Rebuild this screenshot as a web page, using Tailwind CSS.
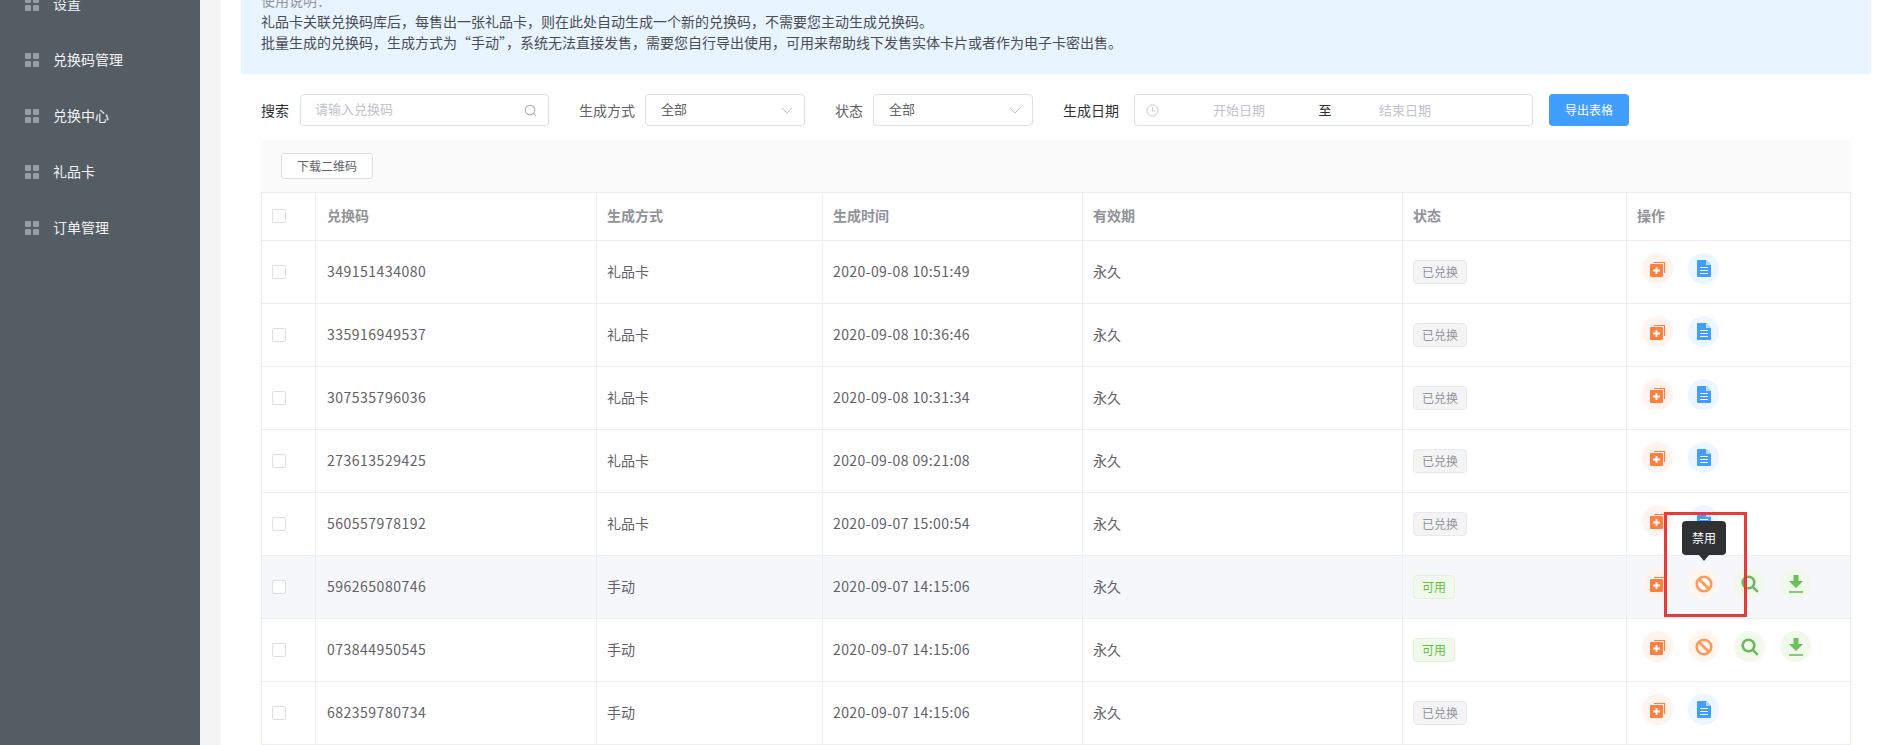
<!DOCTYPE html>
<html lang="zh-CN">
<head>
  <meta charset="UTF-8" />
  <meta name="viewport" content="width=device-width, initial-scale=1" />
  <title>兑换码管理</title>
  <script src="https://cdn.jsdelivr.net/npm/@tailwindcss/browser@4"></script>
</head>
<body class="relative flex h-[745px] overflow-hidden bg-white font-['Noto_Sans_CJK_SC','Noto_Sans',sans-serif] text-[14px] text-[#606266]">
  <aside class="w-[200px] shrink-0 bg-[#545c64] text-[#f2f3f4]">
    <nav class="-mt-[24px]">
      <a class="flex h-[56px] items-center"><span class="ml-[25px] mr-[14px] grid grid-cols-2 gap-[2px]"><i class="size-[6px] rounded-[1px] bg-[#979ca1]"></i><i class="size-[6px] rounded-[1px] bg-[#979ca1]"></i><i class="size-[6px] rounded-[1px] bg-[#979ca1]"></i><i class="size-[6px] rounded-[1px] bg-[#979ca1]"></i></span><span class="-mt-[2px]">设置</span></a>
      <a class="flex h-[56px] items-center"><span class="ml-[25px] mr-[14px] grid grid-cols-2 gap-[2px]"><i class="size-[6px] rounded-[1px] bg-[#979ca1]"></i><i class="size-[6px] rounded-[1px] bg-[#979ca1]"></i><i class="size-[6px] rounded-[1px] bg-[#979ca1]"></i><i class="size-[6px] rounded-[1px] bg-[#979ca1]"></i></span><span class="-mt-[2px]">兑换码管理</span></a>
      <a class="flex h-[56px] items-center"><span class="ml-[25px] mr-[14px] grid grid-cols-2 gap-[2px]"><i class="size-[6px] rounded-[1px] bg-[#979ca1]"></i><i class="size-[6px] rounded-[1px] bg-[#979ca1]"></i><i class="size-[6px] rounded-[1px] bg-[#979ca1]"></i><i class="size-[6px] rounded-[1px] bg-[#979ca1]"></i></span><span class="-mt-[2px]">兑换中心</span></a>
      <a class="flex h-[56px] items-center"><span class="ml-[25px] mr-[14px] grid grid-cols-2 gap-[2px]"><i class="size-[6px] rounded-[1px] bg-[#979ca1]"></i><i class="size-[6px] rounded-[1px] bg-[#979ca1]"></i><i class="size-[6px] rounded-[1px] bg-[#979ca1]"></i><i class="size-[6px] rounded-[1px] bg-[#979ca1]"></i></span><span class="-mt-[2px]">礼品卡</span></a>
      <a class="flex h-[56px] items-center"><span class="ml-[25px] mr-[14px] grid grid-cols-2 gap-[2px]"><i class="size-[6px] rounded-[1px] bg-[#979ca1]"></i><i class="size-[6px] rounded-[1px] bg-[#979ca1]"></i><i class="size-[6px] rounded-[1px] bg-[#979ca1]"></i><i class="size-[6px] rounded-[1px] bg-[#979ca1]"></i></span><span class="-mt-[2px]">订单管理</span></a>
    </nav>
  </aside>
  <div class="w-[21px] shrink-0 bg-[#f3f3f3]"></div>

  <main class="min-w-0 flex-1">
    <!-- 使用说明 -->
    <div class="-mt-[20px] ml-[20px] h-[94px] w-[1630px] rounded-b-[4px] bg-[#e8f4ff] pl-[20px] pt-[10px] leading-[21px] text-[#4a4d52]">
      <p class="text-[#909399]">使用说明：</p>
      <p>礼品卡关联兑换码库后，每售出一张礼品卡，则在此处自动生成一个新的兑换码，不需要您主动生成兑换码。</p>
      <p>批量生成的兑换码，生成方式为“手动”，系统无法直接发售，需要您自行导出使用，可用来帮助线下发售实体卡片或者作为电子卡密出售。</p>
    </div>

    <!-- 筛选 -->
    <div class="ml-[40px] mt-[20px] flex h-[32px] items-center">
      <span class="w-[28px] whitespace-nowrap text-[#303133]">搜索</span>
      <div class="ml-[11px] flex h-[32px] w-[249px] items-center justify-between rounded-[4px] border border-[#dcdfe6] pl-[14px] pr-[11px] text-[13px] text-[#c0c4cc]">
        <span class="-mt-[2px]">请输入兑换码</span>
        <svg class="size-[13px]" viewBox="0 0 14 14" fill="none" stroke="#a8abb2" stroke-width="1.1"><circle cx="6.5" cy="6.5" r="5.2"/><path d="M10.3 10.3L12.6 12.6"/></svg>
      </div>
      <span class="ml-[30px] w-[56px] whitespace-nowrap">生成方式</span>
      <div class="ml-[10px] flex h-[32px] w-[160px] items-center justify-between rounded-[4px] border border-[#dcdfe6] pl-[15px] pr-[11px] text-[13px]">
        <span class="-mt-[2px]">全部</span>
        <svg class="h-[7px] w-[12px]" viewBox="0 0 12 7" fill="none" stroke="#c0c4cc" stroke-width="1"><path d="M1 1L6 6L11 1"/></svg>
      </div>
      <span class="ml-[30px] w-[28px] whitespace-nowrap">状态</span>
      <div class="ml-[10px] flex h-[32px] w-[160px] items-center justify-between rounded-[4px] border border-[#dcdfe6] pl-[15px] pr-[11px] text-[13px]">
        <span class="-mt-[2px]">全部</span>
        <svg class="h-[7px] w-[12px]" viewBox="0 0 12 7" fill="none" stroke="#c0c4cc" stroke-width="1"><path d="M1 1L6 6L11 1"/></svg>
      </div>
      <span class="ml-[30px] w-[56px] whitespace-nowrap text-[#303133]">生成日期</span>
      <div class="ml-[15px] flex h-[32px] w-[399px] items-center rounded-[4px] border border-[#dcdfe6] text-[13px] text-[#c0c4cc]">
        <svg class="ml-[11px] size-[13px] shrink-0" viewBox="0 0 14 14" fill="none" stroke="#c0c4cc" stroke-width="1"><circle cx="7" cy="7" r="6"/><path d="M7 3.5V7.5H10"/></svg>
        <span class="w-[160px] text-center">开始日期</span>
        <span class="-ml-[1px] w-[14px] text-center text-[#303133]">至</span>
        <span class="w-[146px] text-center">结束日期</span>
      </div>
      <button class="ml-[16px] h-[32px] w-[80px] rounded-[4px] bg-[#409eff] text-[12px] text-white">导出表格</button>
    </div>

    <!-- 表格 -->
    <div class="ml-[40px] mt-[14px] w-[1590px]">
      <div class="h-[52px] bg-[#fafafa] pl-[20px] pt-[13px]">
        <button class="h-[26px] w-[92px] rounded-[3px] border border-[#dcdfe6] bg-white text-[12px]">下载二维码</button>
      </div>
      <table class="w-[1589px] table-fixed border-collapse">
        <colgroup>
          <col class="w-[54px]" /><col class="w-[281px]" /><col class="w-[226px]" /><col class="w-[260px]" /><col class="w-[320px]" /><col class="w-[224px]" /><col class="w-[224px]" />
        </colgroup>
        <thead>
          <tr class="h-[48px] text-left text-[#909399]">
            <th class="border border-[#ebeef5] pb-[2px] pl-[10px]"><span class="block size-[14px] rounded-[2px] border border-[#dcdfe6] bg-white"></span></th>
            <th class="border border-[#ebeef5] pb-[2px] pl-[11px] font-semibold">兑换码</th>
            <th class="border border-[#ebeef5] pb-[2px] pl-[10px] font-semibold">生成方式</th>
            <th class="border border-[#ebeef5] pb-[2px] pl-[10px] font-semibold">生成时间</th>
            <th class="border border-[#ebeef5] pb-[2px] pl-[10px] font-semibold">有效期</th>
            <th class="border border-[#ebeef5] pb-[2px] pl-[10px] font-semibold">状态</th>
            <th class="border border-[#ebeef5] pb-[2px] pl-[10px] font-semibold">操作</th>
          </tr>
        </thead>
        <tbody id="rows"></tbody>
      </table>
    </div>
  </main>

  <!-- 提示 + 红框 -->
  <div class="absolute left-[1682px] top-[521px] flex h-[34px] w-[44px] items-center justify-center rounded-[4px] bg-[#303133] text-[12px] text-white">禁用</div>
  <div class="absolute left-[1699px] top-[555px] size-0 border-x-[5px] border-t-[6px] border-x-transparent border-t-[#303133]"></div>
  <div class="absolute left-[1664px] top-[512px] h-[105px] w-[83px] border-[3px] border-[#e83a3a]"></div>

  <script>
    const copyIcon = `<span class="flex size-[31px] items-center justify-center rounded-full bg-[#fff3ed]"><svg class="size-[17px]" viewBox="0 0 17 17"><path d="M5 2.5H15.5V13" fill="none" stroke="#ff7f3f" stroke-width="1.2"/><rect x="1" y="4" width="13" height="13" rx="1" fill="#ff7f3f"/><path d="M7.5 7V14M4 10.5H11" stroke="#fff" stroke-width="1.8"/></svg></span>`;
    const docIcon = `<span class="flex size-[31px] items-center justify-center rounded-full bg-[#edf5ff]"><svg class="h-[17px] w-[14px]" viewBox="0 0 14 17"><path d="M1 0H9L14 5V16a1 1 0 0 1-1 1H1a1 1 0 0 1-1-1V1a1 1 0 0 1 1-1z" fill="#409eff"/><path d="M9 0V5H14z" fill="#b9dcff"/><path d="M3 7.5H11M3 10.5H11M3 13.5H11" stroke="#fff" stroke-width="1.1"/></svg></span>`;
    const banIcon = `<span class="flex size-[31px] items-center justify-center rounded-full bg-[#fff6ef]"><svg class="size-[18px]" viewBox="0 0 18 18" fill="none" stroke="#fb9a5c" stroke-width="2.6"><circle cx="9" cy="9" r="7.3"/><path d="M4 4L14 14"/></svg></span>`;
    const searchIcon = `<span class="flex size-[31px] items-center justify-center rounded-full bg-[#f0f9eb]"><svg class="size-[18px]" viewBox="0 0 18 18" fill="none" stroke="#6cb85c" stroke-width="2.6"><circle cx="7.5" cy="7.5" r="5.8"/><path d="M11.8 11.8L16.8 16.8"/></svg></span>`;
    const downIcon = `<span class="flex size-[31px] items-center justify-center rounded-full bg-[#f0f9eb]"><svg class="h-[18px] w-[16px]" viewBox="0 0 16 18"><path d="M5.5 0H10.5V6H15L8 13L1 6H5.5z" fill="#6cc05a"/><path d="M1 17H15" stroke="#6cc05a" stroke-width="1.6"/></svg></span>`;

    const used = `<span class="inline-flex h-[24px] w-[54px] items-center justify-center rounded-[4px] border border-[#e9e9eb] bg-[#f4f4f5] text-[12px] text-[#909399]">已兑换</span>`;
    const usable = `<span class="inline-flex h-[24px] w-[42px] items-center justify-center rounded-[4px] border border-[#e1f3d8] bg-[#f0f9eb] text-[12px] text-[#67c23a]">可用</span>`;

    const data = [
      ['349151434080', '礼品卡', '2020-09-08 10:51:49', 0],
      ['335916949537', '礼品卡', '2020-09-08 10:36:46', 0],
      ['307535796036', '礼品卡', '2020-09-08 10:31:34', 0],
      ['273613529425', '礼品卡', '2020-09-08 09:21:08', 0],
      ['560557978192', '礼品卡', '2020-09-07 15:00:54', 0],
      ['596265080746', '手动', '2020-09-07 14:15:06', 1],
      ['073844950545', '手动', '2020-09-07 14:15:06', 1],
      ['682359780734', '手动', '2020-09-07 14:15:06', 0],
    ];

    document.getElementById('rows').innerHTML = data.map(([code, way, time, ok], i) => `
      <tr class="h-[63px] ${i === 5 ? 'bg-[#f5f7fa]' : ''}">
        <td class="border border-[#ebeef5] pl-[10px]"><span class="block size-[14px] rounded-[2px] border border-[#dcdfe6] bg-white"></span></td>
        <td class="border border-[#ebeef5] pb-[2px] pl-[11px] tracking-[0.5px]">${code}</td>
        <td class="border border-[#ebeef5] pb-[2px] pl-[10px]">${way}</td>
        <td class="border border-[#ebeef5] pb-[2px] pl-[10px] tracking-[0.4px]">${time}</td>
        <td class="border border-[#ebeef5] pb-[2px] pl-[10px]">永久</td>
        <td class="border border-[#ebeef5] pl-[10px]">${ok ? usable : used}</td>
        <td class="border border-[#ebeef5] pl-[15px]"><div class="mb-[7px] flex gap-[15px]">${copyIcon}${ok ? banIcon + searchIcon + downIcon : docIcon}</div></td>
      </tr>`).join('');
  </script>
</body>
</html>
